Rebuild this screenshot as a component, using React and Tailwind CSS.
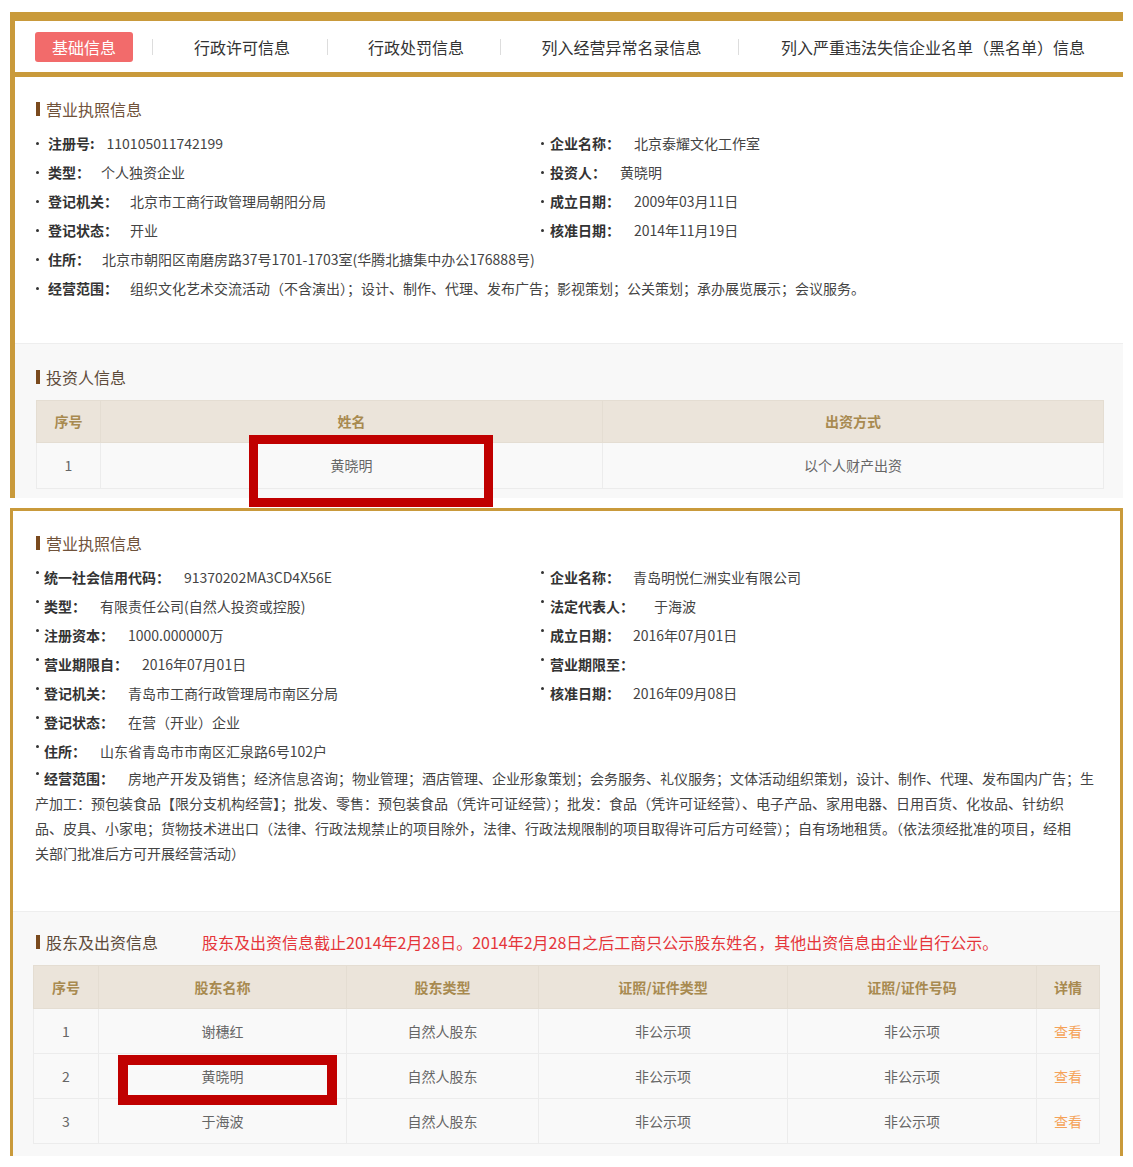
import React from 'react'

const GOLD = 'border-[#c99a3b]'

function Title({ children, tone = 'text-[#70523a]' }) {
  return (
    <div className="flex items-center h-[20px]">
      <span className="w-[4px] h-[14px] bg-[#7a4a1e] ml-px" />
      <span className={`ml-[6px] text-[16px] leading-[20px] ${tone}`}>{children}</span>
    </div>
  )
}

function Dot({ w = 'w-[13px]', raised }) {
  return (
    <span className={`${w} shrink-0 flex items-center self-stretch`}>
      <span className={`block w-[3px] h-[3px] rounded-full bg-[#333] ml-[1px] ${raised ? 'relative -top-[5px]' : ''}`} />
    </span>
  )
}

function Field({ label, value, gap = 'ml-[12px]', dot = 'w-[13px]', raised }) {
  return (
    <div className="flex items-center h-[29px] text-[14px] whitespace-nowrap">
      <Dot w={dot} raised={raised} />
      <span className="font-bold text-[#333]">{label}</span>
      <span className={`${gap} text-[#444]`}>{value}</span>
    </div>
  )
}

function Row({ left, right }) {
  return (
    <div className="flex">
      <div className="w-[505px] shrink-0">{left}</div>
      <div>{right}</div>
    </div>
  )
}

const tabs = ['行政许可信息', '行政处罚信息', '列入经营异常名录信息', '列入严重违法失信企业名单（黑名单）信息']
const tabW = ['w-[174px]', 'w-[172px]', 'w-[237px]', 'flex-1']

function Sep() {
  return <span className="w-px h-[16px] bg-[#ddd] shrink-0" />
}

const th = 'bg-[#ebe4da] text-[#a88a50] font-bold text-[14px] border border-[#e4ddd2] text-center p-0'
const td = 'bg-[#f9f9f9] text-[#666] text-[14px] border border-[#ececec] text-center p-0'

export default function App() {
  return (
    <div className="relative w-[1133px] h-[1167px] bg-white pt-[12px] pl-[10px] text-[#333] font-['Noto_Sans_CJK_SC','Noto_Sans',sans-serif]">
      {/* 上半：个人独资企业 */}
      <div className={`w-[1113px] border-l-[5px] ${GOLD}`}>
        <div className={`h-[65px] border-t-[9px] border-b-[5px] ${GOLD} flex items-center pl-[20px] text-[16px]`}>
          <span className="w-[98px] h-[30px] rounded-[3px] bg-[#f26b6b] text-white flex items-center justify-center">基础信息</span>
          <span className="w-[19px]" />
          <Sep />
          {tabs.map((t, i) => (
            <React.Fragment key={t}>
              <span className={`${tabW[i]} text-center text-[#333] pl-[4px]`}>{t}</span>
              {i < tabs.length - 1 && <Sep />}
            </React.Fragment>
          ))}
        </div>

        <div className="pt-[22px] pb-[40px] pl-[20px]">
          <Title>营业执照信息</Title>
          <div className="mt-[10px]">
            <Row
              left={<Field label="注册号:" value="110105011742199" />}
              right={<Field label="企业名称：" value="北京泰耀文化工作室" dot="w-[10px]" gap="ml-[14px]" />}
            />
            <Row
              left={<Field label="类型：" value="个人独资企业" gap="ml-[11px]" />}
              right={<Field label="投资人：" value="黄晓明" dot="w-[10px]" gap="ml-[14px]" />}
            />
            <Row
              left={<Field label="登记机关：" value="北京市工商行政管理局朝阳分局" />}
              right={<Field label="成立日期：" value="2009年03月11日" dot="w-[10px]" gap="ml-[14px]" />}
            />
            <Row
              left={<Field label="登记状态：" value="开业" />}
              right={<Field label="核准日期：" value="2014年11月19日" dot="w-[10px]" gap="ml-[14px]" />}
            />
            <Field label="住所：" value="北京市朝阳区南磨房路37号1701-1703室(华腾北搪集中办公176888号)" />
            <Field label="经营范围：" value="组织文化艺术交流活动（不含演出）；设计、制作、代理、发布广告；影视策划；公关策划；承办展览展示；会议服务。" />
          </div>
        </div>

        <div className="bg-[#f8f8f8] border-t border-[#eee] pt-[23px] pb-[9px]">
          <div className="pl-[20px]">
            <Title tone="text-[#5e4b3a]">投资人信息</Title>
          </div>
          <table className="mt-[13px] ml-[21px] w-[1068px] border-collapse">
            <thead>
              <tr className="h-[42px]">
                <th className={`${th} w-[64px]`}>序号</th>
                <th className={`${th} w-[502px]`}>姓名</th>
                <th className={th}>出资方式</th>
              </tr>
            </thead>
            <tbody>
              <tr className="h-[46px]">
                <td className={td}>1</td>
                <td className={td}>黄晓明</td>
                <td className={td}>以个人财产出资</td>
              </tr>
            </tbody>
          </table>
        </div>
      </div>

      {/* 下半：有限责任公司 */}
      <div className={`mt-[10px] w-[1113px] border-[3px] border-b-0 ${GOLD}`}>
        <div className="pt-[22px] pb-[45px] pl-[22px] pr-[20px]">
          <Title>营业执照信息</Title>
          <div className="mt-[10px]">
            <Row
              left={<Field label="统一社会信用代码：" value="91370202MA3CD4X56E" dot="w-[9px]" gap="ml-[14px]" raised />}
              right={<Field label="企业名称：" value="青岛明悦仁洲实业有限公司" dot="w-[10px]" gap="ml-[13px]" raised />}
            />
            <Row
              left={<Field label="类型：" value="有限责任公司(自然人投资或控股)" dot="w-[9px]" gap="ml-[14px]" raised />}
              right={<Field label="法定代表人：" value="于海波" dot="w-[10px]" gap="ml-[20px]" raised />}
            />
            <Row
              left={<Field label="注册资本：" value="1000.000000万" dot="w-[9px]" gap="ml-[14px]" raised />}
              right={<Field label="成立日期：" value="2016年07月01日" dot="w-[10px]" gap="ml-[13px]" raised />}
            />
            <Row
              left={<Field label="营业期限自：" value="2016年07月01日" dot="w-[9px]" gap="ml-[14px]" raised />}
              right={<Field label="营业期限至：" value="" dot="w-[10px]" raised />}
            />
            <Row
              left={<Field label="登记机关：" value="青岛市工商行政管理局市南区分局" dot="w-[9px]" gap="ml-[14px]" raised />}
              right={<Field label="核准日期：" value="2016年09月08日" dot="w-[10px]" gap="ml-[13px]" raised />}
            />
            <Field label="登记状态：" value="在营（开业）企业" dot="w-[9px]" gap="ml-[14px]" raised />
            <Field label="住所：" value="山东省青岛市市南区汇泉路6号102户" dot="w-[9px]" gap="ml-[14px]" raised />
            <div className="text-[14px] leading-[25px] text-[#444] whitespace-nowrap">
              <div className="flex">
                <Dot w="w-[9px]" raised />
                <span className="font-bold text-[#333]">经营范围：</span>
                <span className="ml-[14px]">房地产开发及销售；经济信息咨询；物业管理；酒店管理、企业形象策划；会务服务、礼仪服务；文体活动组织策划，设计、制作、代理、发布国内广告；生</span>
              </div>
              <div>产加工：预包装食品【限分支机构经营】；批发、零售：预包装食品（凭许可证经营）；批发：食品（凭许可证经营）、电子产品、家用电器、日用百货、化妆品、针纺织</div>
              <div>品、皮具、小家电；货物技术进出口（法律、行政法规禁止的项目除外，法律、行政法规限制的项目取得许可后方可经营）；自有场地租赁。（依法须经批准的项目，经相</div>
              <div>关部门批准后方可开展经营活动）</div>
            </div>
          </div>
        </div>

        <div className="bg-[#f8f8f8] border-t border-[#eee] pt-[20px] pb-[12px]">
          <div className="pl-[22px] flex items-center">
            <Title tone="text-[#5e4b3a]">股东及出资信息</Title>
            <span className="ml-[44px] text-[16px] leading-[20px] text-[#e5353a]">
              股东及出资信息截止2014年2月28日。2014年2月28日之后工商只公示股东姓名，其他出资信息由企业自行公示。
            </span>
          </div>
          <table className="mt-[13px] ml-[20px] w-[1067px] border-collapse">
            <thead>
              <tr className="h-[43px]">
                <th className={`${th} w-[65px]`}>序号</th>
                <th className={`${th} w-[248px]`}>股东名称</th>
                <th className={`${th} w-[192px]`}>股东类型</th>
                <th className={`${th} w-[249px]`}>证照/证件类型</th>
                <th className={`${th} w-[249px]`}>证照/证件号码</th>
                <th className={th}>详情</th>
              </tr>
            </thead>
            <tbody>
              {['谢穗红', '黄晓明', '于海波'].map((n, i) => (
                <tr key={n} className="h-[45px]">
                  <td className={td}>{i + 1}</td>
                  <td className={td}>{n}</td>
                  <td className={td}>自然人股东</td>
                  <td className={td}>非公示项</td>
                  <td className={td}>非公示项</td>
                  <td className={`${td} text-[#f5a35a]`}>查看</td>
                </tr>
              ))}
            </tbody>
          </table>
        </div>
      </div>

      {/* 红框标注 */}
      <div className="absolute left-[249px] top-[435px] w-[244px] h-[72px] border-[9px] border-[#c00000]" />
      <div className="absolute left-[118px] top-[1055px] w-[219px] h-[50px] border-[10px] border-[#c00000]" />
    </div>
  )
}
